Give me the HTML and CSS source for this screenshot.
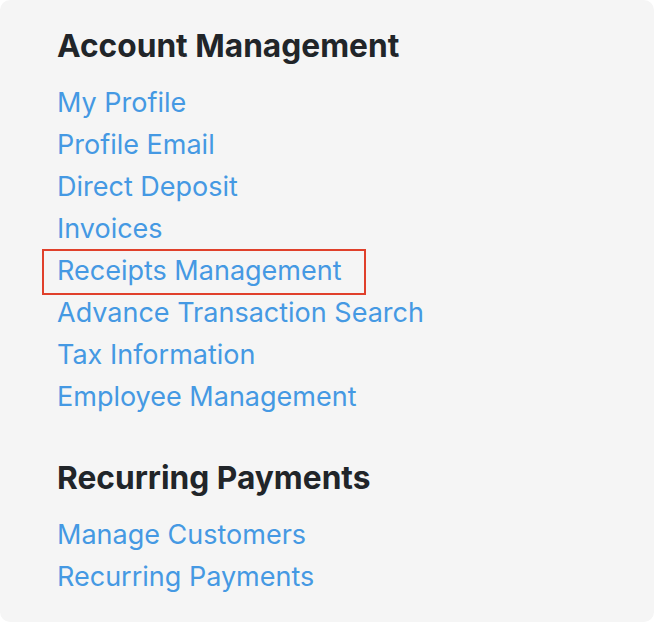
FILE: index.html
```html
<!DOCTYPE html>
<html lang="en">
    <head>
        <meta charset="UTF-8" />
        <meta name="viewport" content="width=device-width, initial-scale=1.0" />
        <title>Account Settings</title>
        <link rel="stylesheet" href="styles.css">
    </head>
    <body>
        <div class="card">
            <div class="section">
                <div class="section-title">Account Management</div>
                <ul class="links">
                    <li><a href="#">My Profile</a></li>
                    <li><a href="#">Profile Email</a></li>
                    <li><a href="#">Direct Deposit</a></li>
                    <li><a href="#">Invoices</a></li>
                    <li><a href="#" class="marked">Receipts Management</a></li>
                    <li><a href="#">Advance Transaction Search</a></li>
                    <li><a href="#">Tax Information</a></li>
                    <li><a href="#">Employee Management</a></li>
                </ul>
            </div>
            <div class="section">
                <div class="section-title">Recurring Payments</div>
                <ul class="links">
                    <li><a href="#">Manage Customers</a></li>
                    <li><a href="#">Recurring Payments</a></li>
                </ul>
            </div>
        </div>
    </body>
</html>
```

FILE: styles.css
```css
body {
    margin: 0;
    background-color: #ffffff;
    font-family: Inter, "Noto Sans", sans-serif;
}
.card {
    height: 622px;
    box-sizing: border-box;
    background-color: #f5f5f5;
    border-radius: 10px;
    padding: 26px 0 0 57px;
    display: flex;
    flex-direction: column;
    gap: 40px;
}
.section-title {
    font-size: 31.7px;
    line-height: 40px;
    font-weight: 700;
    color: #212529;
    margin-bottom: 16px;
}
.links {
    list-style: none;
    margin: 0;
    padding: 0;
}
.links li {
    line-height: 42px;
    height: 42px;
    font-size: 27px;
}
.links a {
    color: #4599e3;
    text-decoration: none;
}
.marked {
    position: relative;
    display: inline-block;
}
.marked::after {
    content: "";
    position: absolute;
    left: -15px;
    right: -24px;
    top: -1px;
    bottom: -3px;
    border: 2px solid #e0402b;
}
```
